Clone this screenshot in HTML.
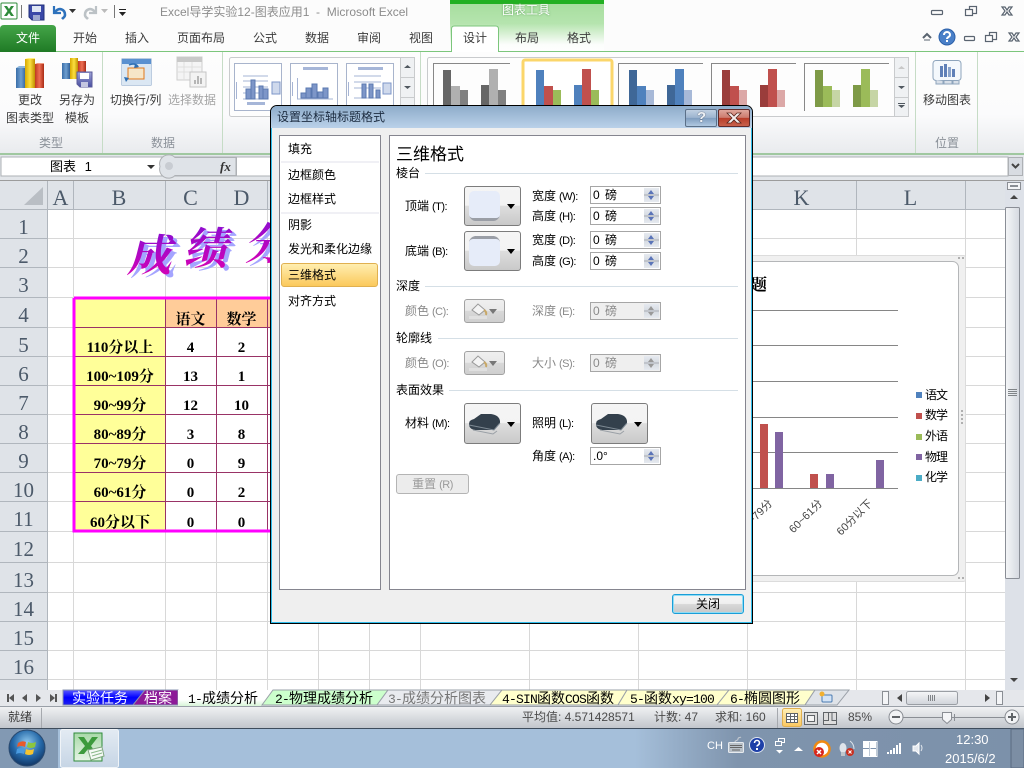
<!DOCTYPE html>
<html lang="zh"><head><meta charset="utf-8"><title>Excel</title>
<style>
html,body{margin:0;padding:0;width:1024px;height:768px;overflow:hidden;background:#fff}
body{position:relative;font:12px/12px "Liberation Sans","WenQuanYi Zen Hei","Noto Sans CJK SC",sans-serif;color:#3c3c3c}
.t{position:absolute;white-space:nowrap;line-height:12px}
svg{position:absolute;left:0;top:0}
.r{font:21px/22px "Liberation Serif",serif;color:#4c5a6a;width:47px;text-align:center;left:0}
.c{font:22px/22px "Liberation Serif",serif;color:#4c5a6a;text-align:center;top:187px}
.b{font:bold 15px/15px "Liberation Serif","Noto Serif CJK SC",serif;color:#000;text-align:center}
.g{color:#8a8a8a}
.k{color:#000}
.s{font-size:14px;line-height:14px;top:691px;color:#000}
.s u{text-decoration:none;font:13px/14px "Liberation Mono",monospace;letter-spacing:-.8px}
em{font:11px/12px "Liberation Sans",sans-serif;margin-left:3px;letter-spacing:-.5px}
.dl{position:absolute}
.dd{position:absolute;box-sizing:border-box;border:1px solid #7c7c7c;border-radius:3px;background:linear-gradient(#f5f5f5 0,#f3f3f3 48%,#dedede 50%,#c9c9c9 100%)}
.dd.off{border-color:#a2a2a2;background:linear-gradient(#efefef 0,#e9e9e9 48%,#d8d8d8 50%,#cfcfcf 100%)}
.dd b{position:absolute;width:0;height:0;border:4px solid transparent;border-top:5px solid #000;border-bottom:0;right:5px;top:50%;margin-top:-2px}
.dd.off b{border-top-color:#777;right:7px}
.sp{position:absolute;box-sizing:border-box;left:590px;width:71px;height:18px;border:1px solid #a6a6a6;background:#fff;color:#000;padding-left:2px;line-height:16px;word-spacing:2px;white-space:nowrap}
.sp i{position:absolute;right:1px;top:1px;width:15px;height:14px;background:linear-gradient(#e6eaf0 0,#d6dbe2 46%,#a9adb3 46%,#a9adb3 54%,#d6dbe2 54%,#e6eaf0 100%)}
.sp i:before,.sp i:after{content:"";position:absolute;left:4px;width:0;height:0;border:3.5px solid transparent}
.sp i:before{top:0;border-bottom:4px solid #5a74b8;border-top:0;margin-top:2px}
.sp i:after{bottom:0;border-top:4px solid #5a74b8;border-bottom:0;margin-bottom:2px}
.sp.off{background:#efefef;color:#8a8a8a}
.sp.off i:before{border-bottom-color:#999}
.sp.off i:after{border-top-color:#999}
</style></head>
<body>
<svg width="1024" height="768" viewBox="0 0 1024 768">
<defs>
<linearGradient id="tt" x1="0" y1="0" x2="0" y2="1"><stop offset="0" stop-color="#a5dd9c"/><stop offset=".45" stop-color="#b5e4ae"/><stop offset=".85" stop-color="#fbfdfb"/><stop offset="1" stop-color="#fff"/></linearGradient>
<linearGradient id="ft" x1="0" y1="0" x2="0" y2="1"><stop offset="0" stop-color="#44a548"/><stop offset="1" stop-color="#1f7a25"/></linearGradient>
<linearGradient id="rb" x1="0" y1="0" x2="0" y2="1"><stop offset="0" stop-color="#fdfdfd"/><stop offset=".62" stop-color="#fbfbfc"/><stop offset="1" stop-color="#e9ebee"/></linearGradient>
<linearGradient id="st" x1="0" y1="0" x2="0" y2="1"><stop offset="0" stop-color="#f0f1f3"/><stop offset="1" stop-color="#c2c6cc"/></linearGradient>
<linearGradient id="tb" x1="0" y1="0" x2="1" y2="0"><stop offset="0" stop-color="#a5bfda"/><stop offset=".62" stop-color="#a5bfda"/><stop offset=".72" stop-color="#7f94ad"/><stop offset="1" stop-color="#7c91aa"/></linearGradient>
<linearGradient id="th" x1="0" y1="0" x2="1" y2="0"><stop offset="0" stop-color="#f5f6f8"/><stop offset="1" stop-color="#d5d9e0"/></linearGradient>
<linearGradient id="thh" x1="0" y1="0" x2="0" y2="1"><stop offset="0" stop-color="#f5f6f8"/><stop offset="1" stop-color="#d0d4da"/></linearGradient>
<linearGradient id="wa" x1="0" y1="0" x2="0" y2="1"><stop offset="0" stop-color="#7a10d8"/><stop offset="1" stop-color="#e000b0"/></linearGradient>
<linearGradient id="bl" x1="0" y1="0" x2="1" y2="0"><stop offset="0" stop-color="#3a6ea8"/><stop offset=".5" stop-color="#6f9fd0"/><stop offset="1" stop-color="#2f5f98"/></linearGradient>
<linearGradient id="ye" x1="0" y1="0" x2="1" y2="0"><stop offset="0" stop-color="#d8a800"/><stop offset=".5" stop-color="#fbe040"/><stop offset="1" stop-color="#c09000"/></linearGradient>
<linearGradient id="rd" x1="0" y1="0" x2="1" y2="0"><stop offset="0" stop-color="#c03a20"/><stop offset=".5" stop-color="#ee7055"/><stop offset="1" stop-color="#a82a15"/></linearGradient>
<linearGradient id="fl" x1="0" y1="0" x2="0" y2="1"><stop offset="0" stop-color="#a0a4d8"/><stop offset="1" stop-color="#484ea0"/></linearGradient>
<linearGradient id="blu" x1="0" y1="0" x2="0" y2="1"><stop offset="0" stop-color="#5a5aff"/><stop offset=".5" stop-color="#0000ff"/><stop offset="1" stop-color="#2020ee"/></linearGradient>
<linearGradient id="act" x1="0" y1="0" x2="0" y2="1"><stop offset="0" stop-color="#fff"/><stop offset=".6" stop-color="#fff"/><stop offset="1" stop-color="#d8f5d8"/></linearGradient>
<linearGradient id="gd" x1="0" y1="0" x2="0" y2="1"><stop offset="0" stop-color="#fff0b8"/><stop offset="1" stop-color="#fbc860"/></linearGradient>
<linearGradient id="btn" x1="0" y1="0" x2="0" y2="1"><stop offset="0" stop-color="#e3ebf3"/><stop offset="1" stop-color="#c6d5e5"/></linearGradient>
<linearGradient id="xl" x1="0" y1="0" x2="0" y2="1"><stop offset="0" stop-color="#a8d8a8"/><stop offset="1" stop-color="#e6f4e6"/></linearGradient>
<radialGradient id="orb" cx=".5" cy=".35" r=".7"><stop offset="0" stop-color="#8fc8ee"/><stop offset=".55" stop-color="#2468a8"/><stop offset="1" stop-color="#0d2c58"/></radialGradient>
<g id="bars"><rect x="0" y="70" width="8" height="37" style="fill:var(--a)"/><rect x="8" y="86" width="9" height="21" style="fill:var(--b)"/><rect x="17" y="90" width="8" height="17" style="fill:var(--c)"/><rect x="38" y="85" width="8" height="22" style="fill:var(--a)"/><rect x="46" y="69" width="9" height="38" style="fill:var(--b)"/><rect x="55" y="90" width="8" height="17" style="fill:var(--c)"/></g>
</defs>

<!-- title + ribbon -->
<rect width="1024" height="52" fill="#fcfcfc"/>
<rect x="450" y="0" width="154" height="52" fill="url(#tt)"/>
<rect x="450" y="0" width="154" height="4" fill="#22b022"/>
<rect x="0" y="52" width="1024" height="101" fill="url(#rb)"/>
<rect x="0" y="51" width="1024" height="1" fill="#7cc67c"/>
<rect x="0" y="153" width="1024" height="2" fill="#a0c8a0"/>
<path d="M0 52V29q0-4 4-4H52q4 0 4 4V52Z" fill="url(#ft)"/>
<path d="M451.500 52V29q0-3 3-3H495.500q3 0 3 3V52" fill="#fff" stroke="#7cc67c"/>
<rect x="452" y="51" width="46" height="1" fill="#fff"/>
<g stroke="#c6dcc6" shape-rendering="crispEdges"><path d="M102.500 52V153M222.500 52V153M420.500 52V153M915.500 52V153M977.500 52V153"/></g>

<!-- quick access -->
<rect x="1" y="3" width="16" height="16" rx="1" fill="#fff" stroke="#2e8b3a"/>
<path d="M4 6h3l2 3 2-3h3l-3.500 5 3.500 5h-3l-2-3-2 3H4l3.500-5Z" fill="#2e8b3a"/>
<path d="M21.500 5v13M114.500 5v13" stroke="#777" shape-rendering="crispEdges"/>
<path d="M29 5h15v15H32l-3-3Z" fill="#3a48a8" stroke="#22307a"/><rect x="32" y="6" width="9" height="6" fill="#dfe6f4"/><rect x="33" y="15" width="7" height="5" fill="#9da7d0"/>
<path d="M54 6v7h7" fill="none" stroke="#2e72bc" stroke-width="2.200"/><path d="M55 12c4-5 10-3 10 3 0 2-2 3-3 4" fill="none" stroke="#2e72bc" stroke-width="2.600"/>
<path d="M69 9h7l-3.500 4Z" fill="#333"/>
<path d="M96 6v7h-7" fill="none" stroke="#bcc2c6" stroke-width="2.200"/><path d="M95 12c-4-5-10-3-10 3 0 2 2 3 3 4" fill="none" stroke="#bcc2c6" stroke-width="2.600"/>
<path d="M101 9h7l-3.500 4Z" fill="#bbb"/>
<rect x="119" y="9" width="7" height="1" fill="#222"/><path d="M119 12h7l-3.500 4Z" fill="#222"/>

<!-- window controls -->
<g fill="none" stroke="#5a6470" stroke-width="1.200">
<rect x="931.500" y="10.500" width="11" height="4" rx="1"/>
<rect x="969.500" y="6.500" width="7" height="7"/><rect x="965.500" y="9.500" width="7" height="6" fill="#fcfcfc"/>
<path d="M1002 7l3 0 2 3 2-3 3 0-3 4 3 4-3 0-2-3-2 3-3 0 3-4Z"/>
<path d="M923 38l4-4 4 4" stroke-width="2"/><path d="M924 40h6" stroke-width="1"/>
<rect x="964.500" y="36.500" width="10" height="4" rx="1"/>
<rect x="989.500" y="32.500" width="7" height="7"/><rect x="985.500" y="35.500" width="7" height="6" fill="#fcfcfc"/>
<path d="M1009 33l3 0 2 3 2-3 3 0-3 4 3 4-3 0-2-3-2 3-3 0 3-4Z"/>
</g>
<circle cx="947" cy="37" r="8" fill="#4a80c8" stroke="#2c60a8"/><path d="M944 35c0-4 6-4 6 0 0 2-3 2-3 4" fill="none" stroke="#fff" stroke-width="2"/><rect x="946" y="40" width="2" height="2" fill="#fff"/>

<!-- ribbon icons -->
<rect x="16" y="68" width="10" height="20" fill="url(#bl)"/><path d="M16 68l3-2h7v2" fill="#8cb6dc"/>
<rect x="25" y="59" width="10" height="29" fill="url(#ye)"/><path d="M25 59l3-1h7v1" fill="#fff080"/>
<rect x="35" y="64" width="9" height="24" fill="url(#rd)"/><path d="M35 64l2-1h7v1" fill="#f09a80"/>
<rect x="62" y="63" width="8" height="16" fill="url(#bl)"/>
<rect x="70" y="58" width="8" height="21" fill="url(#ye)"/>
<rect x="78" y="61" width="8" height="18" fill="url(#rd)"/>
<path d="M77 72h15v15H80l-3-3Z" fill="url(#fl)" stroke="#5a5a9a"/><rect x="80" y="73" width="9" height="6" fill="#fff"/><rect x="81" y="82" width="7" height="5" fill="#c4c6e0"/>
<rect x="122" y="59" width="29" height="26" fill="#fff" stroke="#7c9cc4"/><rect x="122" y="59" width="29" height="5" fill="#5a90d0"/>
<rect x="122" y="64" width="29" height="21" fill="#dbe7f3"/>
<rect x="128" y="68" width="16" height="11" fill="#f6e6c8" stroke="#e0781c"/>
<path d="M129 65c4-2 8-1 9 2" fill="none" stroke="#2e6fb4" stroke-width="1.500"/><path d="M124 77l5 1-3 4ZM135 64l4 3-5 1Z" fill="#2e6fb4"/>
<g opacity=".6"><rect x="177" y="57" width="25" height="23" fill="#f0f0f0" stroke="#b0b0b0"/><rect x="177" y="57" width="25" height="5" fill="#a8a8a8"/><path d="M177 67h25M177 72h25M184 62v18M192 62v18" stroke="#ccc"/><rect x="190" y="72" width="16" height="15" fill="#eee" stroke="#a0a0a0"/><path d="M194 84v-4h2v4zm3 0v-8h2v8zm3 0v-6h2v6z" fill="#888"/></g>
<rect x="933" y="60.500" width="28" height="20" rx="3" fill="#f4f8fc" stroke="#8ea4bc"/><path d="M936 80v4h7v-3M944 81v3h8v-3M953 81v3h6v-3" fill="#d8dfe8" stroke="#8ea4bc"/>
<rect x="940" y="66" width="3" height="11" fill="#5f80b8"/><rect x="944" y="64" width="3" height="13" fill="#5f80b8"/><rect x="948" y="67" width="3" height="10" fill="#8aa4cc"/><rect x="952" y="69" width="3" height="8" fill="#5f80b8"/>

<!-- gallery 1 -->
<rect x="229.500" y="57.500" width="185" height="59" rx="2" fill="#fdfdfd" stroke="#c9cbcd"/>
<g fill="#fff" stroke="#a8b4cc" shape-rendering="crispEdges"><rect x="234.500" y="63.500" width="47" height="47"/><rect x="290.500" y="63.500" width="47" height="47"/><rect x="346.500" y="63.500" width="47" height="47"/></g>
<g fill="none" stroke="#a6b4d4" shape-rendering="crispEdges"><path d="M243 76h25M243 81h25M243 87h25M243 93h25M243 99h25M236.500 82v17M297.500 78v21H333M292.500 82v14M354 76h27M354 82h27M354 88h27M354 98h27M348.500 82v14"/></g>
<g fill="#7d96c8" stroke="#5a78b0"><rect x="246" y="89" width="5" height="10"/><rect x="251" y="80" width="4" height="19"/><rect x="259" y="86" width="4" height="13"/><rect x="263" y="89" width="5" height="10"/>
<rect x="301" y="93" width="5" height="5"/><rect x="306" y="88" width="5" height="10"/><rect x="312" y="84" width="5" height="14"/><rect x="318" y="92" width="5" height="6"/><rect x="323" y="88" width="5" height="10"/>
<rect x="362" y="84" width="4" height="14"/><rect x="369" y="84" width="4" height="14"/><rect x="376" y="90" width="4" height="8"/></g>
<rect x="303" y="67" width="25" height="3" fill="#a6b6d8"/><rect x="358" y="67" width="25" height="3" fill="#a6b6d8"/><rect x="247" y="102" width="18" height="3" fill="#a6b6d8"/>
<rect x="272" y="82" width="8" height="12" fill="#cfd9ec" stroke="#7d96c8"/><rect x="383" y="83" width="8" height="11" fill="#cfd9ec" stroke="#7d96c8"/>
<g fill="#eff1f3" stroke="#c9cbcd" shape-rendering="crispEdges"><rect x="400.500" y="57.500" width="14" height="20"/><rect x="400.500" y="77.500" width="14" height="20"/><rect x="400.500" y="97.500" width="14" height="19"/></g>
<path d="M404 68l3.500-3 3.500 3ZM404 86l3.500 3 3.500-3Z" fill="#505860"/>

<!-- gallery 2 -->
<rect x="427.500" y="57.500" width="481" height="59" rx="2" fill="#fdfdfd" stroke="#c9cbcd"/>
<path d="M433.500 111V63.500H510M618.500 111V63.500H703M711.500 111V63.500H796M804.500 111V63.500H889" fill="none" stroke="#888" shape-rendering="crispEdges"/>
<rect x="523" y="60" width="89" height="56" rx="2" fill="#fff" stroke="#fbd66a" stroke-width="3"/>
<use href="#bars" x="443" style="--a:#666;--b:#b0b0b0;--c:#808080"/>
<use href="#bars" x="536" style="--a:#4f81bd;--b:#c0504d;--c:#9bbb59"/>
<use href="#bars" x="629" style="--a:#3f6797;--b:#4f81bd;--c:#a7b9d8"/>
<use href="#bars" x="722" style="--a:#9a3d3b;--b:#c0504d;--c:#dca8a7"/>
<use href="#bars" x="815" style="--a:#7e9a47;--b:#9bbb59;--c:#c6d5a5"/>
<g fill="#eff1f3" stroke="#c9cbcd" shape-rendering="crispEdges"><rect x="894.500" y="57.500" width="14" height="20"/><rect x="894.500" y="77.500" width="14" height="20"/><rect x="894.500" y="97.500" width="14" height="19"/></g>
<path d="M898 69l3.500-3 3.500 3Z" fill="#c8c8c8"/><path d="M898 86l3.500 3 3.500-3ZM898 105l3.500 3 3.500-3Z" fill="#505860"/><rect x="898" y="103" width="7" height="1" fill="#505860"/>

<!-- formula bar -->
<rect x="0" y="155" width="1024" height="26" fill="#e3e6ea"/>
<rect x="1" y="157" width="1007" height="19" fill="#fff" stroke="#aeb1b5"/>
<path d="M175 157.500h61v18h-61a9 9 0 0 1-15-9 9 9 0 0 1 15-9Z" fill="#dfe3e8" stroke="#aeb1b5"/>
<circle cx="169" cy="166" r="4" fill="#c8ccd2"/>
<path d="M147 165h8l-4 4Z" fill="#333"/>
<path d="M236.500 157v19" stroke="#aeb1b5"/>
<rect x="1008.500" y="157.500" width="14" height="18" fill="#d8dce2" stroke="#aeb1b5"/><path d="M1012 164l3.500 3.500 3.500-3.500" fill="none" stroke="#444" stroke-width="2"/>
<rect x="0" y="180" width="1024" height="1" fill="#9c9c9c"/>

<!-- sheet grid -->
<rect x="0" y="181" width="1005" height="28" fill="#dfe3e8"/>
<rect x="0" y="209" width="48" height="481" fill="#dfe3e8"/>
<g stroke="#d8d8d8" shape-rendering="crispEdges"><path d="M73.500 209V690M165.500 209V690M216.500 209V690M267.500 209V690M318.500 209V690M369.500 209V690M420.500 209V690M529.500 209V690M638.500 209V690M747.500 209V690M856.500 209V690M965.500 209V690M48 238.500H1005M48 267.500H1005M48 297.500H1005M48 327.500H1005M48 356.500H1005M48 385.500H1005M48 414.500H1005M48 443.500H1005M48 472.500H1005M48 501.500H1005M48 531.500H1005M48 562.500H1005M48 592.500H1005M48 621.500H1005M48 650.500H1005M48 679.500H1005"/></g>
<g stroke="#b0b6bd" shape-rendering="crispEdges"><path d="M47.500 181V690M73.500 181V209M165.500 181V209M216.500 181V209M267.500 181V209M318.500 181V209M369.500 181V209M420.500 181V209M529.500 181V209M638.500 181V209M747.500 181V209M856.500 181V209M965.500 181V209M0 209.500H1005M0 238.500H47M0 267.500H47M0 297.500H47M0 327.500H47M0 356.500H47M0 385.500H47M0 414.500H47M0 443.500H47M0 472.500H47M0 501.500H47M0 531.500H47M0 562.500H47M0 592.500H47M0 621.500H47M0 650.500H47M0 679.500H47"/></g>
<path d="M43 187V205H24Z" fill="#b9bec4"/>

<!-- table -->
<rect x="75" y="299" width="90" height="231" fill="#ffff99"/>
<rect x="165" y="299" width="115" height="28" fill="#ffcc99"/>
<rect x="165" y="327" width="115" height="203" fill="#fff"/>
<g stroke="#993366" shape-rendering="crispEdges"><path d="M75 327.500H280M75 356.500H280M75 385.500H280M75 414.500H280M75 443.500H280M75 472.500H280M75 501.500H280M165.500 299V530M216.500 299V530M267.500 299V530"/></g>
<path d="M74 298H280M74 298V531H280" fill="none" stroke="#ff00ff" stroke-width="3"/>

<!-- word art -->
<g font-family='"Noto Serif CJK SC","WenQuanYi Zen Hei",serif' font-size="44" font-weight="700" font-style="italic">
<text x="131" y="274" fill="#a4a4ff">成</text><text x="187" y="267" fill="#a4a4ff">绩</text><text x="248" y="262" fill="#a4a4ff">分</text>
<text x="127" y="271" fill="url(#wa)">成</text><text x="183" y="264" fill="url(#wa)">绩</text><text x="244" y="259" fill="url(#wa)">分</text>
</g>

<!-- chart -->
<rect x="700.500" y="255.500" width="265" height="326" rx="2" fill="#f0f0f0" stroke="#dcdcdc"/>
<rect x="700.500" y="261.500" width="258" height="314" rx="6" fill="#fff" stroke="#b4b6b8"/>
<g stroke="#868686" shape-rendering="crispEdges"><path d="M700 310.500H898M700 345.500H898M700 381.500H898M700 417.500H898M700 452.500H898M700 488.500H898"/></g>
<rect x="760" y="424" width="8" height="64" fill="#c0504d"/><rect x="775" y="432" width="8" height="56" fill="#8064a2"/>
<rect x="810" y="474" width="8" height="14" fill="#c0504d"/><rect x="826" y="474" width="8" height="14" fill="#8064a2"/>
<rect x="876" y="460" width="8" height="28" fill="#8064a2"/>
<rect x="916" y="392" width="6" height="6" fill="#4f81bd"/><rect x="916" y="413" width="6" height="6" fill="#c0504d"/><rect x="916" y="434" width="6" height="6" fill="#9bbb59"/><rect x="916" y="454" width="6" height="6" fill="#8064a2"/><rect x="916" y="475" width="6" height="6" fill="#4bacc6"/>
<g font-family='"Liberation Sans","WenQuanYi Zen Hei",sans-serif' font-size="11" fill="#444" text-anchor="end">
<text transform="rotate(-45 773 504)" x="773" y="504">70~79分</text>
<text transform="rotate(-45 823 504)" x="823" y="504">60~61分</text>
<text transform="rotate(-45 873 504)" x="873" y="504">60分以下</text></g>
<g fill="#b0b0b0"><rect x="961" y="410" width="2" height="2"/><rect x="961" y="414" width="2" height="2"/><rect x="961" y="418" width="2" height="2"/><rect x="961" y="422" width="2" height="2"/><rect x="958" y="577" width="2" height="2"/><rect x="962" y="577" width="2" height="2"/><rect x="962" y="257" width="2" height="2"/><rect x="958" y="257" width="2" height="2"/></g>

<!-- v scrollbar -->
<rect x="1005" y="181" width="19" height="509" fill="#dde1e8"/>
<rect x="1007.500" y="182.500" width="13" height="7" fill="#f4f5f7" stroke="#8a8e94"/><rect x="1010" y="185" width="8" height="2" fill="#8a8e94"/>
<path d="M1010 199l4-4 4 4Z" fill="#444"/>
<rect x="1005.500" y="207.500" width="14" height="371" rx="1" fill="url(#th)" stroke="#8a8e96"/>
<path d="M1008 389.500h9M1008 391.500h9M1008 393.500h9M1008 395.500h9" stroke="#808488"/>
<path d="M1010 678l4 4 4-4Z" fill="#444"/>

<!-- sheet tabs -->
<rect x="0" y="690" width="1024" height="17" fill="#e5e7eb"/>
<g fill="#555"><path d="M7 694v8h2v-8ZM14 694v8l-5-4Z"/><path d="M27 694v8l-5-4Z"/><path d="M36 694v8l5-4Z"/><path d="M50 694v8l5-4ZM55 694v8h2v-8Z"/></g>
<path d="M63 690H145L133 705H63Z" fill="url(#blu)" stroke="#8a94b0"/>
<path d="M145 690H178V705H133Z" fill="#8d1a98" stroke="#8a94b0"/>
<path d="M178 690H273L262 706H178Z" fill="url(#act)"/>
<path d="M273 690H388L377 705H262Z" fill="#ccffcc" stroke="#9aa0a8"/>
<path d="M388 690H502L490 705H377Z" fill="#e9ebef" stroke="#9aa0a8"/>
<path d="M502 690H627L618 705H490Z" fill="#ffffcc" stroke="#9aa0a8"/>
<path d="M627 690H729L717 705H618Z" fill="#ffffcc" stroke="#9aa0a8"/>
<path d="M729 690H815L805 705H717Z" fill="#ffffcc" stroke="#9aa0a8"/>
<path d="M815 690H849L837 705H805Z" fill="#dfe3e8" stroke="#9aa0a8"/>
<rect x="822" y="695" width="10" height="7" rx="1" fill="#d4e4f6" stroke="#4a7ab0"/><circle cx="822" cy="694" r="2.500" fill="#f2b030"/>
<rect x="882.500" y="691.500" width="6" height="13" fill="#f4f5f7" stroke="#8a8e94"/>
<path d="M902 694v8l-5-4Z" fill="#444"/>
<rect x="906.500" y="691.500" width="51" height="13" rx="2" fill="url(#thh)" stroke="#9a9ea4"/>
<path d="M928.500 695v6M930.500 695v6M932.500 695v6M934.500 695v6" stroke="#808488"/>
<path d="M985 694v8l5-4Z" fill="#444"/>
<rect x="996.500" y="691.500" width="6" height="13" fill="#f4f5f7" stroke="#8a8e94"/>
<rect x="0" y="706" width="1024" height="1" fill="#9aa0a8"/>

<!-- status -->
<rect x="0" y="707" width="1024" height="21" fill="url(#st)"/>
<rect x="0" y="728" width="1024" height="1" fill="#3e4c5c"/>
<path d="M41.500 708v20M777.500 708v20" stroke="#a6a9ae" shape-rendering="crispEdges"/>
<rect x="782.500" y="708.500" width="19" height="18" rx="2" fill="url(#gd)" stroke="#e0b050"/>
<g fill="#fff" stroke="#606468"><rect x="786.500" y="713.500" width="11" height="9"/><path d="M786.500 716.500h11M786.500 719.500h11M790.500 713.500v9M794.500 713.500v9" fill="none"/></g>
<rect x="804.500" y="712.500" width="13" height="12" fill="#ddd" stroke="#606468"/><rect x="807.500" y="715.500" width="7" height="6" fill="#f4f4f4" stroke="#606468"/>
<path d="M823.500 712.500h13v12h-13ZM828.500 712.500v8h-5M832 712.500v8h4" fill="#ddd" stroke="#606468"/>
<rect x="903" y="717" width="102" height="1" fill="#8a8e94"/>
<circle cx="896" cy="717" r="7" fill="#f2f3f5" stroke="#868a90"/><rect x="892" y="716" width="8" height="2" fill="#606468"/>
<circle cx="1012" cy="717" r="7" fill="#f2f3f5" stroke="#868a90"/><path d="M1008 716h8v2h-8ZM1011 713h2v8h-2Z" fill="#606468"/>
<path d="M942.500 712.500h9v7l-4.500 4-4.500-4Z" fill="#f4f5f7" stroke="#8a8e94"/>
<path d="M954.500 714v7" stroke="#8a8e94"/>

<!-- taskbar -->
<rect x="0" y="729" width="1024" height="39" fill="url(#tb)"/>
<rect x="0" y="729" width="58" height="39" fill="#8299b3"/>
<rect x="1011" y="729" width="13" height="39" fill="#7c8ea4" stroke="#5a6a80"/>
<rect x="60.500" y="729.500" width="58" height="38" rx="2" fill="url(#btn)" stroke="#f0f4f8"/>
<circle cx="27" cy="748" r="18" fill="url(#orb)" stroke="#2a4a70"/>
<path d="M18 743q4-3 8-1l-1 5q-4-2-8 0Z" fill="#e85a2c"/><path d="M28 742q4 2 8 0l-1 5q-4 2-8 0Z" fill="#8cc63e"/><path d="M17 749q4-2 8 0l-1 5q-4-2-8 0Z" fill="#4a9be0"/><path d="M26 749q4 2 8 0l-1 5q-4 2-8 0Z" fill="#f4c430"/>
<rect x="74" y="733" width="28" height="28" fill="url(#xl)" stroke="#2e8b3a"/>
<path d="M78 737h6l4 6 4-6h6l-7 9 6 8h-6l-3-5-4 5h-6l7-8Z" fill="#3c9a3c"/>
<path d="M88 750l14-3 2 9-13 4Z" fill="#f6faf6" stroke="#80a880"/><path d="M91 753l11-3M92 756l10-3" stroke="#8ab88a"/>

<!-- tray -->
<rect x="728.500" y="742.500" width="15" height="10" rx="1" fill="#b8c0c8" stroke="#e6eaee"/><path d="M730 745.500h12M730 747.500h12M732 750h8" stroke="#666"/><path d="M735 742c0-2 3-1 3-3s2-1 3-2" fill="none" stroke="#c8ccd2"/>
<circle cx="757" cy="745" r="7.500" fill="#1d3fa8" stroke="#dfe6f0"/><path d="M754.500 743c0-3.500 5-3.500 5 0 0 2-2.500 2-2.500 3.500" fill="none" stroke="#fff" stroke-width="1.600"/><rect x="756" y="748" width="2" height="2" fill="#fff"/>
<rect x="778.500" y="738.500" width="6" height="4" fill="none" stroke="#fff"/><rect x="775.500" y="741.500" width="6" height="4" fill="#7f94ad" stroke="#fff"/>
<path d="M776 750h7l-3.500 3.500Z" fill="#fff"/>
<path d="M794 751l4.500-4 4.500 4Z" fill="#fff"/>
<circle cx="822" cy="749" r="7.500" fill="#fff" stroke="#f08a10" stroke-width="2.500"/><circle cx="819" cy="752" r="5" fill="#d8261c"/><path d="M817 750l4 4m0-4l-4 4" stroke="#fff" stroke-width="1.500"/>
<ellipse cx="843" cy="748" rx="3.500" ry="5" fill="#dfe4ea"/><rect x="841" y="752" width="4" height="4" fill="#bfc6cc"/><path d="M850 741q4 3 4 8" stroke="#dfe4ea" fill="none"/><circle cx="850" cy="752" r="4" fill="#c83020"/><path d="M848.500 750.500l3 3m0-3l-3 3" stroke="#fff"/>
<g fill="#fff"><rect x="863" y="742" width="6" height="6"/><rect x="870" y="742" width="6" height="6"/><rect x="863" y="749" width="6" height="7"/><rect x="870" y="749" width="6" height="7"/></g>
<path d="M863 741.500h14v15h-14M870 741.500v15" fill="none" stroke="#fff"/>
<g fill="#fff"><rect x="887" y="752" width="2" height="2"/><rect x="890" y="750" width="2" height="4"/><rect x="893" y="748" width="2" height="6"/><rect x="896" y="745" width="2" height="9"/><rect x="899" y="743" width="2" height="11"/></g>
<path d="M913 746h3l3-3v11l-3-3h-3Z" fill="#e4e8ee" stroke="#fff"/><path d="M921 745q2 3 0 6" fill="none" stroke="#e4e8ee"/>
</svg>

<!-- title text -->
<span class="t" style="left:160px;top:6px;color:#8c8c8c;font-size:12px;line-height:13px">Excel导学实验12-图表应用1&nbsp; -&nbsp; Microsoft Excel</span>
<span class="t" style="left:502px;top:4px;color:#fff;text-shadow:0 0 2px #5a9a5a">图表工具</span>
<span class="t" style="left:16px;top:32px;color:#fff">文件</span>
<span class="t" style="left:73px;top:32px">开始</span>
<span class="t" style="left:125px;top:32px">插入</span>
<span class="t" style="left:177px;top:32px">页面布局</span>
<span class="t" style="left:253px;top:32px">公式</span>
<span class="t" style="left:305px;top:32px">数据</span>
<span class="t" style="left:357px;top:32px">审阅</span>
<span class="t" style="left:409px;top:32px">视图</span>
<span class="t" style="left:463px;top:32px">设计</span>
<span class="t" style="left:515px;top:32px">布局</span>
<span class="t" style="left:567px;top:32px">格式</span>
<span class="t" style="left:18px;top:94px">更改</span>
<span class="t" style="left:6px;top:112px">图表类型</span>
<span class="t" style="left:59px;top:94px">另存为</span>
<span class="t" style="left:65px;top:112px">模板</span>
<span class="t" style="left:110px;top:94px">切换行/列</span>
<span class="t" style="left:168px;top:94px;color:#a4a4a4">选择数据</span>
<span class="t" style="left:923px;top:94px">移动图表</span>
<span class="t" style="left:39px;top:137px;color:#8a9098">类型</span>
<span class="t" style="left:151px;top:137px;color:#8a9098">数据</span>
<span class="t" style="left:935px;top:137px;color:#8a9098">位置</span>
<span class="t k" style="left:50px;top:161px;font-size:13px;word-spacing:5px">图表 1</span>
<span class="t" style="left:220px;top:160px;font:italic bold 13px/14px 'Liberation Serif',serif;color:#333">fx</span>

<!-- headers -->
<span class="t c" style="left:48px;width:25px">A</span>
<span class="t c" style="left:73px;width:92px">B</span>
<span class="t c" style="left:165px;width:51px">C</span>
<span class="t c" style="left:216px;width:51px">D</span>
<span class="t c" style="left:747px;width:109px">K</span>
<span class="t c" style="left:856px;width:109px">L</span>
<span class="t r" style="top:216px">1</span>
<span class="t r" style="top:245px">2</span>
<span class="t r" style="top:274px">3</span>
<span class="t r" style="top:304px">4</span>
<span class="t r" style="top:334px">5</span>
<span class="t r" style="top:363px">6</span>
<span class="t r" style="top:392px">7</span>
<span class="t r" style="top:421px">8</span>
<span class="t r" style="top:450px">9</span>
<span class="t r" style="top:479px">10</span>
<span class="t r" style="top:508px">11</span>
<span class="t r" style="top:538px">12</span>
<span class="t r" style="top:569px">13</span>
<span class="t r" style="top:598px">14</span>
<span class="t r" style="top:627px">15</span>
<span class="t r" style="top:656px">16</span>

<!-- table text -->
<span class="t b" style="left:165px;width:51px;top:313px">语文</span>
<span class="t b" style="left:216px;width:51px;top:313px">数学</span>
<span class="t b" style="left:75px;width:90px;top:341px">110分以上</span><span class="t b" style="left:165px;width:51px;top:341px">4</span><span class="t b" style="left:216px;width:51px;top:341px">2</span>
<span class="t b" style="left:75px;width:90px;top:370px">100~109分</span><span class="t b" style="left:165px;width:51px;top:370px">13</span><span class="t b" style="left:216px;width:51px;top:370px">1</span>
<span class="t b" style="left:75px;width:90px;top:399px">90~99分</span><span class="t b" style="left:165px;width:51px;top:399px">12</span><span class="t b" style="left:216px;width:51px;top:399px">10</span>
<span class="t b" style="left:75px;width:90px;top:428px">80~89分</span><span class="t b" style="left:165px;width:51px;top:428px">3</span><span class="t b" style="left:216px;width:51px;top:428px">8</span>
<span class="t b" style="left:75px;width:90px;top:457px">70~79分</span><span class="t b" style="left:165px;width:51px;top:457px">0</span><span class="t b" style="left:216px;width:51px;top:457px">9</span>
<span class="t b" style="left:75px;width:90px;top:486px">60~61分</span><span class="t b" style="left:165px;width:51px;top:486px">0</span><span class="t b" style="left:216px;width:51px;top:486px">2</span>
<span class="t b" style="left:75px;width:90px;top:516px">60分以下</span><span class="t b" style="left:165px;width:51px;top:516px">0</span><span class="t b" style="left:216px;width:51px;top:516px">0</span>

<!-- chart text -->
<span class="t" style="left:751px;top:276px;font:bold 16px/16px 'Noto Serif CJK SC',serif;color:#000">题</span>
<span class="t k" style="left:925px;top:389px;letter-spacing:-1px;font-size:12px">语文</span>
<span class="t k" style="left:925px;top:409px;letter-spacing:-1px">数学</span>
<span class="t k" style="left:925px;top:430px;letter-spacing:-1px">外语</span>
<span class="t k" style="left:925px;top:451px;letter-spacing:-1px">物理</span>
<span class="t k" style="left:925px;top:471px;letter-spacing:-1px">化学</span>

<!-- tabs text -->
<span class="t s" style="left:72px;color:#fff">实验任务</span>
<span class="t s" style="left:144px;color:#fff">档案</span>
<span class="t s" style="left:188px"><u>1-</u>成绩分析</span>
<span class="t s" style="left:275px"><u>2-</u>物理成绩分析</span>
<span class="t s" style="left:388px;color:#777"><u>3-</u>成绩分析图表</span>
<span class="t s" style="left:502px"><u>4-SIN</u>函数<u>COS</u>函数</span>
<span class="t s" style="left:630px"><u>5-</u>函数<u>xy=100</u></span>
<span class="t s" style="left:730px"><u>6-</u>椭圆图形</span>

<!-- status text -->
<span class="t" style="left:8px;top:711px">就绪</span>
<span class="t" style="left:522px;top:711px;color:#4a4a4a">平均值: 4.571428571</span>
<span class="t" style="left:654px;top:711px;color:#4a4a4a">计数: 47</span>
<span class="t" style="left:715px;top:711px;color:#4a4a4a">求和: 160</span>
<span class="t" style="left:848px;top:711px;color:#4a4a4a">85%</span>

<!-- tray text -->
<span class="t" style="left:707px;top:740px;color:#fff;font-size:11px">CH</span>
<span class="t" style="left:956px;top:733px;color:#fff;font-size:13px;line-height:13px">12:30</span>
<span class="t" style="left:945px;top:752px;color:#fff;font-size:13px;line-height:13px">2015/6/2</span>

<!-- dialog -->
<div class="dl" style="left:270px;top:105px;width:483px;height:519px;box-sizing:border-box;background:#efefef;border:1px solid #000;border-radius:7px 7px 0 0;box-shadow:inset 0 0 0 1px #2fbdec"></div>
<div class="dl" style="left:271px;top:106px;width:481px;height:22px;border-radius:6px 6px 0 0;background:linear-gradient(#8eacca,#bad1e9)"></div>
<div class="dl" style="left:279px;top:135px;width:102px;height:455px;box-sizing:border-box;background:#fff;border:1px solid #85858f"></div>
<div class="dl" style="left:389px;top:135px;width:357px;height:455px;box-sizing:border-box;background:#fff;border:1px solid #85858f"></div>
<div class="dl" style="left:281px;top:161px;width:98px;height:2px;background:#f0f0f5"></div>
<div class="dl" style="left:281px;top:212px;width:98px;height:2px;background:#f0f0f5"></div>
<div class="dl" style="left:281px;top:263px;width:97px;height:24px;box-sizing:border-box;border:1px solid #e0b050;border-radius:3px;background:linear-gradient(#ffeeb0,#fbc95c)"></div>

<span class="t" style="left:277px;top:111px;color:#1c2c40">设置坐标轴标题格式</span>
<div class="dl" style="left:685px;top:109px;width:32px;height:18px;box-sizing:border-box;border:1px solid #5b7088;border-radius:2px;background:linear-gradient(#c0d0e2,#9cb4cf 48%,#7e9cbe 50%,#b0c8e0)"></div>
<div class="dl" style="left:718px;top:109px;width:32px;height:18px;box-sizing:border-box;border:1px solid #602a2a;border-radius:2px;background:linear-gradient(#dfa79c,#cc7a6c 48%,#b83c28 50%,#c8614c)"></div>
<span class="t" style="left:697px;top:110px;font:bold 15px/15px 'Liberation Sans',sans-serif;color:#eef2f6;text-shadow:0 0 1px #223">?</span>
<svg style="left:726px;top:112px" width="16" height="12"><path d="M1 1h4l3 3 3-3h4l-5 5 5 5h-4l-3-3-3 3H1l5-5Z" fill="#f4eeee" stroke="#5a2820" stroke-width=".8"/></svg>

<span class="t k" style="left:288px;top:143px">填充</span>
<span class="t k" style="left:288px;top:169px">边框颜色</span>
<span class="t k" style="left:288px;top:193px">边框样式</span>
<span class="t k" style="left:288px;top:219px">阴影</span>
<span class="t k" style="left:288px;top:243px">发光和柔化边缘</span>
<span class="t k" style="left:288px;top:269px">三维格式</span>
<span class="t k" style="left:288px;top:295px">对齐方式</span>

<span class="t k" style="left:396px;top:146px;font-size:17px;line-height:17px">三维格式</span>

<span class="t k" style="left:396px;top:167px">棱台</span>
<div class="dl" style="left:425px;top:173px;width:313px;height:1px;background:#d5dfe6"></div>
<span class="t k" style="left:405px;top:200px">顶端<em>(T):</em></span>
<span class="t k" style="left:405px;top:245px">底端<em>(B):</em></span>
<div class="dd" style="left:464px;top:186px;width:57px;height:40px"><b></b>
<svg style="left:3px;top:3px" width="34" height="33"><rect x="1" y="1" width="31" height="29" rx="5" fill="#e6ecf9"/><path d="M1 25q1 5 6 6h19q5-1 6-6-1 3-4 3H5q-3 0-4-3Z" fill="#9a9ea6"/></svg></div>
<div class="dd" style="left:464px;top:231px;width:57px;height:40px"><b></b>
<svg style="left:3px;top:3px" width="34" height="33"><rect x="1" y="3" width="31" height="28" rx="5" fill="#e6ecf9"/><path d="M1 7q1-5 6-6h19q5 1 6 6-1-3-4-3H5q-3 0-4 3Z" fill="#9a9ea6"/></svg></div>
<span class="t k" style="left:532px;top:190px">宽度<em>(W):</em></span>
<span class="t k" style="left:532px;top:210px">高度<em>(H):</em></span>
<span class="t k" style="left:532px;top:234px">宽度<em>(D):</em></span>
<span class="t k" style="left:532px;top:255px">高度<em>(G):</em></span>
<div class="sp" style="top:186px">0 磅<i></i></div>
<div class="sp" style="top:207px">0 磅<i></i></div>
<div class="sp" style="top:231px">0 磅<i></i></div>
<div class="sp" style="top:252px">0 磅<i></i></div>

<span class="t k" style="left:396px;top:280px">深度</span>
<div class="dl" style="left:425px;top:286px;width:313px;height:1px;background:#d5dfe6"></div>
<span class="t g" style="left:405px;top:305px">颜色<em>(C):</em></span>
<div class="dd off" style="left:464px;top:299px;width:41px;height:24px"><b></b>
<svg style="left:3px;top:2px" width="22" height="18"><path d="M4 8l6-6 7 6-6 5Z" fill="#f4f4f4" stroke="#999"/><path d="M16 8q3 2 2 5" fill="none" stroke="#c8a868" stroke-width="2"/><rect x="1" y="14" width="18" height="3" fill="#e0e0e0"/></svg></div>
<span class="t g" style="left:532px;top:305px">深度<em>(E):</em></span>
<div class="sp off" style="top:302px">0 磅<i></i></div>

<span class="t k" style="left:396px;top:332px">轮廓线</span>
<div class="dl" style="left:438px;top:338px;width:300px;height:1px;background:#d5dfe6"></div>
<span class="t g" style="left:405px;top:357px">颜色<em>(O):</em></span>
<div class="dd off" style="left:464px;top:351px;width:41px;height:24px"><b></b>
<svg style="left:3px;top:2px" width="22" height="18"><path d="M4 8l6-6 7 6-6 5Z" fill="#f4f4f4" stroke="#999"/><path d="M16 8q3 2 2 5" fill="none" stroke="#c8a868" stroke-width="2"/><rect x="1" y="14" width="18" height="3" fill="#e0e0e0"/></svg></div>
<span class="t g" style="left:532px;top:357px">大小<em>(S):</em></span>
<div class="sp off" style="top:354px">0 磅<i></i></div>

<span class="t k" style="left:396px;top:384px">表面效果</span>
<div class="dl" style="left:449px;top:390px;width:289px;height:1px;background:#d5dfe6"></div>
<span class="t k" style="left:405px;top:417px">材料<em>(M):</em></span>
<div class="dd" style="left:464px;top:403px;width:57px;height:41px"><b></b>
<svg style="left:3px;top:8px" width="34" height="24"><path d="M1 12q0-4 5-5L13 2h10q8 1 9 7v2l-6 7H7q-6-1-6-6Z" fill="#33404c"/><path d="M1 13l25 5 6-7" fill="none" stroke="#7e8a94"/><path d="M5 18l20 4 4-3" fill="none" stroke="#9aa0a6"/></svg></div>
<span class="t k" style="left:532px;top:417px">照明<em>(L):</em></span>
<div class="dd" style="left:591px;top:403px;width:57px;height:41px"><b></b>
<svg style="left:3px;top:8px" width="34" height="24"><path d="M1 12q0-4 5-5L13 2h10q8 1 9 7v2l-6 7H7q-6-1-6-6Z" fill="#33404c"/><path d="M1 13l25 5 6-7" fill="none" stroke="#7e8a94"/><path d="M5 18l20 4 4-3" fill="none" stroke="#9aa0a6"/></svg></div>
<span class="t k" style="left:532px;top:450px">角度<em>(A):</em></span>
<div class="sp" style="top:447px">.0°<i></i></div>

<div class="dl" style="left:396px;top:474px;width:73px;height:20px;box-sizing:border-box;border:1px solid #b4b4b4;border-radius:3px;background:#ececec;color:#9a9a9a;text-align:center;line-height:18px">重置<em>(R)</em></div>
<div class="dl" style="left:672px;top:594px;width:72px;height:20px;box-sizing:border-box;border:1px solid #1a9ed8;border-radius:3px;background:linear-gradient(#f4f4f4,#f0f0f0 48%,#d8d8d8 52%,#c8c8c8);box-shadow:inset 0 0 0 1px #8fdcf4;color:#000;text-align:center;line-height:18px">关闭</div>
</body></html>
